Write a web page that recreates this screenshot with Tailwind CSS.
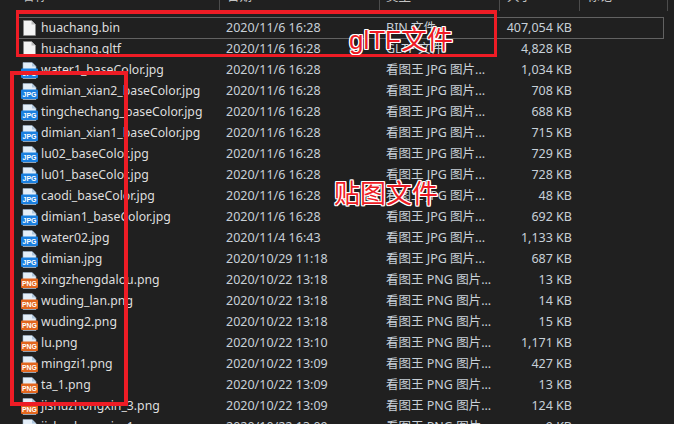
<!doctype html>
<html lang="zh">
<head>
    <meta charset="UTF-8">
    <script src="https://cdn.jsdelivr.net/npm/@tailwindcss/browser@4"></script>
    <title>huachang</title>
</head>
<body class="bg-[#202020]">
<svg width="0" height="0" class="absolute">
    <symbol id="doc" viewBox="0 0 13 16">
        <path d="M.5.5h8l4 4v11H.5z" fill="#f4f4f4" stroke="#8a8a8a" stroke-width=".6"/>
        <path d="M8.5.5v4h4z" fill="#bdbdbd"/>
    </symbol>
    <symbol id="jpg" viewBox="0 0 17 17">
        <path d="M2 .5h9l4 4v12H2z" fill="#e4eef8" stroke="#9fb6cc" stroke-width=".6"/>
        <path d="M11 .5v4h4z" fill="#aec6dd"/>
        <rect x="0" y="6.5" width="17" height="9.5" rx="1" fill="#1b80e0"/>
        <text x="8.5" y="14" text-anchor="middle" font-family="Liberation Sans" font-weight="700" font-size="7.5" textLength="14" lengthAdjust="spacingAndGlyphs" fill="#fff">JPG</text>
    </symbol>
    <symbol id="png" viewBox="0 0 17 17">
        <path d="M2 .5h9l4 4v12H2z" fill="#e4eef8" stroke="#9fb6cc" stroke-width=".6"/>
        <path d="M11 .5v4h4z" fill="#aec6dd"/>
        <rect x="0" y="6.5" width="17" height="9.5" rx="1" fill="#e2661e"/>
        <text x="8.5" y="14" text-anchor="middle" font-family="Liberation Sans" font-weight="700" font-size="7.5" textLength="15" lengthAdjust="spacingAndGlyphs" fill="#fff">PNG</text>
    </symbol>
</svg>

<div class="relative w-[674px] h-[424px] overflow-hidden bg-[#202020] text-[#dedede] text-[12.5px] font-['Noto_Sans','Noto_Sans_CJK_SC',sans-serif]">
    <!-- column header, cut off by the top of the picture -->
    <header class="flex h-[22px] -mt-[11px] leading-[16px] text-[#c4c4c4]">
        <div class="w-[220px] pl-[22px] border-r border-[#4c4c4c]">名称</div>
        <div class="w-[160px] pl-[7px] border-r border-[#4c4c4c]">日期</div>
        <div class="w-[120px] pl-[6px] border-r border-[#4c4c4c]">类型</div>
        <div class="w-[80px] pl-[7px] border-r border-[#4c4c4c]">大小</div>
        <div class="w-[88px] pl-[7px] border-r border-[#4c4c4c]">标记</div>
    </header>

    <main class="mt-[6px] ml-[17px] w-[647px] flex flex-col">
        <div class="flex h-[22px] -mb-px items-center border border-[#626262]">
            <div class="w-[202px] flex items-center pl-[2px] text-[12.25px]"><span class="w-[18px] flex justify-center"><svg width="13" height="16"><use href="#doc"/></svg></span><span class="ml-[3px]">huachang.bin</span></div>
            <div class="w-[160px] pl-[6px] text-[#c8d0d8]">2020/11/6 16:28</div>
            <div class="w-[120px] pl-[6px] text-[#c8d0d8]">BIN 文件</div>
            <div class="w-[72px] text-right text-[#c8d0d8]">407,054 KB</div>
        </div>
        <div class="flex h-[22px] -mb-px items-center border border-transparent">
            <div class="w-[202px] flex items-center pl-[2px] text-[12.25px]"><span class="w-[18px] flex justify-center"><svg width="13" height="16"><use href="#doc"/></svg></span><span class="ml-[3px]">huachang.gltf</span></div>
            <div class="w-[160px] pl-[6px] text-[#c8d0d8]">2020/11/6 16:28</div>
            <div class="w-[120px] pl-[6px] text-[#c8d0d8]">GLTF 文件</div>
            <div class="w-[72px] text-right text-[#c8d0d8]">4,828 KB</div>
        </div>
        <div class="flex h-[22px] -mb-px items-center border border-transparent">
            <div class="w-[202px] flex items-center pl-[2px] text-[12.25px]"><span class="w-[18px] flex justify-center"><svg width="17" height="17"><use href="#jpg"/></svg></span><span class="ml-[3px]">water1_baseColor.jpg</span></div>
            <div class="w-[160px] pl-[6px] text-[#c8d0d8]">2020/11/6 16:28</div>
            <div class="w-[120px] pl-[6px] text-[#c8d0d8]">看图王 JPG 图片...</div>
            <div class="w-[72px] text-right text-[#c8d0d8]">1,034 KB</div>
        </div>
        <div class="flex h-[22px] -mb-px items-center border border-transparent">
            <div class="w-[202px] flex items-center pl-[2px] text-[12.25px]"><span class="w-[18px] flex justify-center"><svg width="17" height="17"><use href="#jpg"/></svg></span><span class="ml-[3px]">dimian_xian2_baseColor.jpg</span></div>
            <div class="w-[160px] pl-[6px] text-[#c8d0d8]">2020/11/6 16:28</div>
            <div class="w-[120px] pl-[6px] text-[#c8d0d8]">看图王 JPG 图片...</div>
            <div class="w-[72px] text-right text-[#c8d0d8]">708 KB</div>
        </div>
        <div class="flex h-[22px] -mb-px items-center border border-transparent">
            <div class="w-[202px] flex items-center pl-[2px] text-[12.25px]"><span class="w-[18px] flex justify-center"><svg width="17" height="17"><use href="#jpg"/></svg></span><span class="ml-[3px]">tingchechang_baseColor.jpg</span></div>
            <div class="w-[160px] pl-[6px] text-[#c8d0d8]">2020/11/6 16:28</div>
            <div class="w-[120px] pl-[6px] text-[#c8d0d8]">看图王 JPG 图片...</div>
            <div class="w-[72px] text-right text-[#c8d0d8]">688 KB</div>
        </div>
        <div class="flex h-[22px] -mb-px items-center border border-transparent">
            <div class="w-[202px] flex items-center pl-[2px] text-[12.25px]"><span class="w-[18px] flex justify-center"><svg width="17" height="17"><use href="#jpg"/></svg></span><span class="ml-[3px]">dimian_xian1_baseColor.jpg</span></div>
            <div class="w-[160px] pl-[6px] text-[#c8d0d8]">2020/11/6 16:28</div>
            <div class="w-[120px] pl-[6px] text-[#c8d0d8]">看图王 JPG 图片...</div>
            <div class="w-[72px] text-right text-[#c8d0d8]">715 KB</div>
        </div>
        <div class="flex h-[22px] -mb-px items-center border border-transparent">
            <div class="w-[202px] flex items-center pl-[2px] text-[12.25px]"><span class="w-[18px] flex justify-center"><svg width="17" height="17"><use href="#jpg"/></svg></span><span class="ml-[3px]">lu02_baseColor.jpg</span></div>
            <div class="w-[160px] pl-[6px] text-[#c8d0d8]">2020/11/6 16:28</div>
            <div class="w-[120px] pl-[6px] text-[#c8d0d8]">看图王 JPG 图片...</div>
            <div class="w-[72px] text-right text-[#c8d0d8]">729 KB</div>
        </div>
        <div class="flex h-[22px] -mb-px items-center border border-transparent">
            <div class="w-[202px] flex items-center pl-[2px] text-[12.25px]"><span class="w-[18px] flex justify-center"><svg width="17" height="17"><use href="#jpg"/></svg></span><span class="ml-[3px]">lu01_baseColor.jpg</span></div>
            <div class="w-[160px] pl-[6px] text-[#c8d0d8]">2020/11/6 16:28</div>
            <div class="w-[120px] pl-[6px] text-[#c8d0d8]">看图王 JPG 图片...</div>
            <div class="w-[72px] text-right text-[#c8d0d8]">728 KB</div>
        </div>
        <div class="flex h-[22px] -mb-px items-center border border-transparent">
            <div class="w-[202px] flex items-center pl-[2px] text-[12.25px]"><span class="w-[18px] flex justify-center"><svg width="17" height="17"><use href="#jpg"/></svg></span><span class="ml-[3px]">caodi_baseColor.jpg</span></div>
            <div class="w-[160px] pl-[6px] text-[#c8d0d8]">2020/11/6 16:28</div>
            <div class="w-[120px] pl-[6px] text-[#c8d0d8]">看图王 JPG 图片...</div>
            <div class="w-[72px] text-right text-[#c8d0d8]">48 KB</div>
        </div>
        <div class="flex h-[22px] -mb-px items-center border border-transparent">
            <div class="w-[202px] flex items-center pl-[2px] text-[12.25px]"><span class="w-[18px] flex justify-center"><svg width="17" height="17"><use href="#jpg"/></svg></span><span class="ml-[3px]">dimian1_baseColor.jpg</span></div>
            <div class="w-[160px] pl-[6px] text-[#c8d0d8]">2020/11/6 16:28</div>
            <div class="w-[120px] pl-[6px] text-[#c8d0d8]">看图王 JPG 图片...</div>
            <div class="w-[72px] text-right text-[#c8d0d8]">692 KB</div>
        </div>
        <div class="flex h-[22px] -mb-px items-center border border-transparent">
            <div class="w-[202px] flex items-center pl-[2px] text-[12.25px]"><span class="w-[18px] flex justify-center"><svg width="17" height="17"><use href="#jpg"/></svg></span><span class="ml-[3px]">water02.jpg</span></div>
            <div class="w-[160px] pl-[6px] text-[#c8d0d8]">2020/11/4 16:43</div>
            <div class="w-[120px] pl-[6px] text-[#c8d0d8]">看图王 JPG 图片...</div>
            <div class="w-[72px] text-right text-[#c8d0d8]">1,133 KB</div>
        </div>
        <div class="flex h-[22px] -mb-px items-center border border-transparent">
            <div class="w-[202px] flex items-center pl-[2px] text-[12.25px]"><span class="w-[18px] flex justify-center"><svg width="17" height="17"><use href="#jpg"/></svg></span><span class="ml-[3px]">dimian.jpg</span></div>
            <div class="w-[160px] pl-[6px] text-[#c8d0d8]">2020/10/29 11:18</div>
            <div class="w-[120px] pl-[6px] text-[#c8d0d8]">看图王 JPG 图片...</div>
            <div class="w-[72px] text-right text-[#c8d0d8]">687 KB</div>
        </div>
        <div class="flex h-[22px] -mb-px items-center border border-transparent">
            <div class="w-[202px] flex items-center pl-[2px] text-[12.25px]"><span class="w-[18px] flex justify-center"><svg width="17" height="17"><use href="#png"/></svg></span><span class="ml-[3px]">xingzhengdalou.png</span></div>
            <div class="w-[160px] pl-[6px] text-[#c8d0d8]">2020/10/22 13:18</div>
            <div class="w-[120px] pl-[6px] text-[#c8d0d8]">看图王 PNG 图片...</div>
            <div class="w-[72px] text-right text-[#c8d0d8]">13 KB</div>
        </div>
        <div class="flex h-[22px] -mb-px items-center border border-transparent">
            <div class="w-[202px] flex items-center pl-[2px] text-[12.25px]"><span class="w-[18px] flex justify-center"><svg width="17" height="17"><use href="#png"/></svg></span><span class="ml-[3px]">wuding_lan.png</span></div>
            <div class="w-[160px] pl-[6px] text-[#c8d0d8]">2020/10/22 13:18</div>
            <div class="w-[120px] pl-[6px] text-[#c8d0d8]">看图王 PNG 图片...</div>
            <div class="w-[72px] text-right text-[#c8d0d8]">14 KB</div>
        </div>
        <div class="flex h-[22px] -mb-px items-center border border-transparent">
            <div class="w-[202px] flex items-center pl-[2px] text-[12.25px]"><span class="w-[18px] flex justify-center"><svg width="17" height="17"><use href="#png"/></svg></span><span class="ml-[3px]">wuding2.png</span></div>
            <div class="w-[160px] pl-[6px] text-[#c8d0d8]">2020/10/22 13:18</div>
            <div class="w-[120px] pl-[6px] text-[#c8d0d8]">看图王 PNG 图片...</div>
            <div class="w-[72px] text-right text-[#c8d0d8]">15 KB</div>
        </div>
        <div class="flex h-[22px] -mb-px items-center border border-transparent">
            <div class="w-[202px] flex items-center pl-[2px] text-[12.25px]"><span class="w-[18px] flex justify-center"><svg width="17" height="17"><use href="#png"/></svg></span><span class="ml-[3px]">lu.png</span></div>
            <div class="w-[160px] pl-[6px] text-[#c8d0d8]">2020/10/22 13:10</div>
            <div class="w-[120px] pl-[6px] text-[#c8d0d8]">看图王 PNG 图片...</div>
            <div class="w-[72px] text-right text-[#c8d0d8]">1,171 KB</div>
        </div>
        <div class="flex h-[22px] -mb-px items-center border border-transparent">
            <div class="w-[202px] flex items-center pl-[2px] text-[12.25px]"><span class="w-[18px] flex justify-center"><svg width="17" height="17"><use href="#png"/></svg></span><span class="ml-[3px]">mingzi1.png</span></div>
            <div class="w-[160px] pl-[6px] text-[#c8d0d8]">2020/10/22 13:09</div>
            <div class="w-[120px] pl-[6px] text-[#c8d0d8]">看图王 PNG 图片...</div>
            <div class="w-[72px] text-right text-[#c8d0d8]">427 KB</div>
        </div>
        <div class="flex h-[22px] -mb-px items-center border border-transparent">
            <div class="w-[202px] flex items-center pl-[2px] text-[12.25px]"><span class="w-[18px] flex justify-center"><svg width="17" height="17"><use href="#png"/></svg></span><span class="ml-[3px]">ta_1.png</span></div>
            <div class="w-[160px] pl-[6px] text-[#c8d0d8]">2020/10/22 13:09</div>
            <div class="w-[120px] pl-[6px] text-[#c8d0d8]">看图王 PNG 图片...</div>
            <div class="w-[72px] text-right text-[#c8d0d8]">13 KB</div>
        </div>
        <div class="flex h-[22px] -mb-px items-center border border-transparent">
            <div class="w-[202px] flex items-center pl-[2px] text-[12.25px]"><span class="w-[18px] flex justify-center"><svg width="17" height="17"><use href="#png"/></svg></span><span class="ml-[3px]">jishuzhongxin_3.png</span></div>
            <div class="w-[160px] pl-[6px] text-[#c8d0d8]">2020/10/22 13:09</div>
            <div class="w-[120px] pl-[6px] text-[#c8d0d8]">看图王 PNG 图片...</div>
            <div class="w-[72px] text-right text-[#c8d0d8]">124 KB</div>
        </div>
        <div class="flex h-[22px] -mb-px items-center border border-transparent">
            <div class="w-[202px] flex items-center pl-[2px] text-[12.25px]"><span class="w-[18px] flex justify-center"><svg width="17" height="17"><use href="#png"/></svg></span><span class="ml-[3px]">jishuzhongxin_1.png</span></div>
            <div class="w-[160px] pl-[6px] text-[#c8d0d8]">2020/10/22 13:09</div>
            <div class="w-[120px] pl-[6px] text-[#c8d0d8]">看图王 PNG 图片...</div>
            <div class="w-[72px] text-right text-[#c8d0d8]">9 KB</div>
        </div>
    </main>

    <!-- red annotations drawn over the screenshot -->
    <div class="absolute left-[16px] top-[10px] w-[481px] h-[47px] border-[3px] border-t-4 border-[#ee1c25]"></div>
    <div class="absolute left-[10px] top-[71px] w-[118px] h-[335px] border-[4px] border-[#ee1c25]"></div>
    <div class="absolute left-[349px] top-[23px] text-[26px] leading-[34px] text-[#ee1c25] font-['Liberation_Sans','Noto_Sans_CJK_SC',sans-serif] [text-shadow:1px_0_#fff,-1px_0_#fff,0_1px_#fff,0_-1px_#fff,1px_1px_#fff,-1px_-1px_#fff,1px_-1px_#fff,-1px_1px_#fff]">glTF文件</div>
    <div class="absolute left-[334px] top-[177px] text-[26px] leading-[34px] text-[#ee1c25] font-['Liberation_Sans','Noto_Sans_CJK_SC',sans-serif] [text-shadow:1px_0_#fff,-1px_0_#fff,0_1px_#fff,0_-1px_#fff,1px_1px_#fff,-1px_-1px_#fff,1px_-1px_#fff,-1px_1px_#fff]">贴图文件</div>
</div>
</body>
</html>
